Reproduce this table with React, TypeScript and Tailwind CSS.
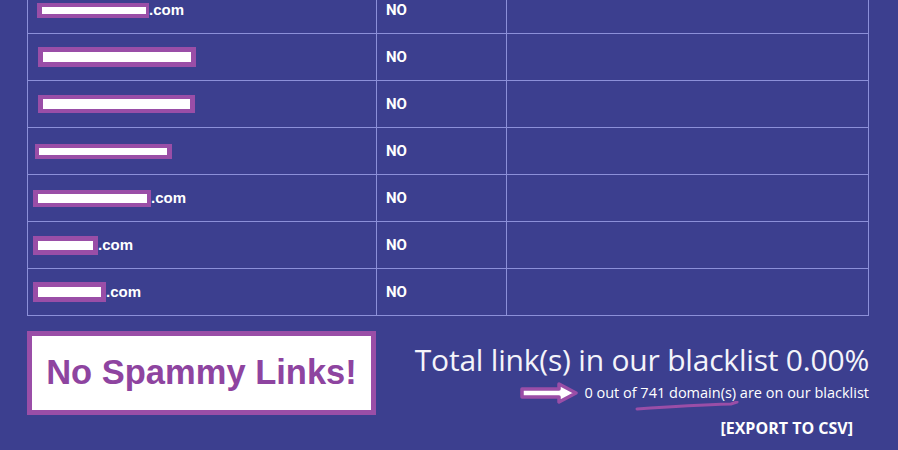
import React from "react";

const rows = [
  { ml: "ml-[9px]", pl: "pl-[5px]", pr: "pr-[3px]", py: "py-[4px]", w: "w-[104px]", h: "h-[7px]", tail: ".com" },
  { ml: "ml-[10px]", pl: "pl-[5px]", pr: "pr-[5px]", py: "py-[5px]", w: "w-[148px]", h: "h-[10px]", tail: "" },
  { ml: "ml-[10px]", pl: "pl-[5px]", pr: "pr-[5px]", py: "py-[4px]", w: "w-[147px]", h: "h-[10px]", tail: "" },
  { ml: "ml-[7px]", pl: "pl-[4px]", pr: "pr-[5px]", py: "py-[4px]", w: "w-[128px]", h: "h-[7px]", tail: "" },
  { ml: "ml-[5px]", pl: "pl-[5px]", pr: "pr-[4px]", py: "py-[4px]", w: "w-[109px]", h: "h-[9px]", tail: ".com" },
  { ml: "ml-[5px]", pl: "pl-[5px]", pr: "pr-[5px]", py: "py-[5px]", w: "w-[55px]", h: "h-[9px]", tail: ".com" },
  { ml: "ml-[5px]", pl: "pl-[5px]", pr: "pr-[5px]", py: "py-[5px]", w: "w-[63px]", h: "h-[10px]", tail: ".com" },
];

export default function App() {
  return (
    <div className="w-[898px] h-[450px] overflow-hidden bg-[#3c3f8f] text-white">
      <div className="ml-[27px] w-[842px]">
        {/* table */}
        <div className="mt-[-13px] border-l border-r border-[#8c90d9]">
          {rows.map((r, i) => (
            <div key={i} className="grid grid-cols-[349px_130px_1fr] h-[47px] border-b border-[#8c90d9]">
              <div className="flex items-center border-r border-[#8c90d9] font-['Liberation_Sans',Arial,sans-serif] font-bold text-[15px]">
                <span className={`${r.ml} ${r.pl} ${r.pr} ${r.py} inline-flex items-center bg-[#9a4ea7]`}>
                  <span className={`${r.w} ${r.h} bg-white block`} />
                </span>
                <span>{r.tail}</span>
              </div>
              <div className="flex items-center pl-[9px] border-r border-[#8c90d9] font-['Roboto',sans-serif] font-bold text-[15px]">
                NO
              </div>
              <div />
            </div>
          ))}
        </div>

        {/* summary */}
        <div className="flex mt-[15px]">
          <div className="w-[349px] h-[84px] border-[5px] border-[#9a4ea7] bg-white flex items-center justify-center">
            <span className="font-['Liberation_Sans',Arial,sans-serif] font-bold text-[34.5px] text-[#8e44a0]">
              No Spammy Links!
            </span>
          </div>
          <div className="flex-1 flex flex-col items-end font-['Open_Sans',sans-serif]">
            <div className="mt-[10px] text-[30px] leading-[38px] tracking-[-0.2px] text-[#f4f4fa]">
              Total link(s) in our blacklist 0.00%
            </div>
            <div className="relative flex items-center mt-[3px] text-[14.5px] leading-[20px]">
              <svg width="60" height="22" viewBox="0 0 60 22" className="mr-[5px]">
                <path d="M3 7 H40 V2 L57 11 L40 20 V15 H3 Z" fill="#ffffff" stroke="#9a4ea7" strokeWidth="3.5" strokeLinejoin="round" />
              </svg>
              <span>0 out of 741 domain(s) are on our blacklist</span>
              <svg width="110" height="10" viewBox="0 0 110 10" className="absolute left-[116px] top-[19px]">
                <path d="M2 8 C30 6, 60 4, 96 3 L102 1" stroke="#9a4ea7" strokeWidth="3" fill="none" strokeLinecap="round" />
              </svg>
            </div>
            <div className="mt-[14px] mr-[16px] text-[16px] font-bold leading-[20px]">[EXPORT TO CSV]</div>
          </div>
        </div>
      </div>
    </div>
  );
}
